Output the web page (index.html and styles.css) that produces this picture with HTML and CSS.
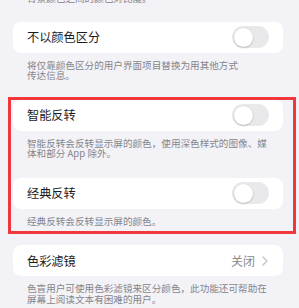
FILE: index.html
```html
<!DOCTYPE html>
<html lang="zh-CN">
<head>
<meta charset="utf-8">
<link rel="stylesheet" href="styles.css">
</head>
<body>
<div class="page">
  <p class="desc top">背景颜色之间的颜色对比度。</p>

  <div class="card"><span class="title">不以颜色区分</span><span class="toggle"><span class="knob"></span></span></div>
  <p class="desc">将仅靠颜色区分的用户界面项目替换为用其他方式<br>传达信息。</p>

  <div class="card"><span class="title">智能反转</span><span class="toggle"><span class="knob"></span></span></div>
  <p class="desc">智能反转会反转显示屏的颜色，使用深色样式的图像、媒<br>体和部分 App 除外。</p>

  <div class="card"><span class="title">经典反转</span><span class="toggle"><span class="knob"></span></span></div>
  <p class="desc">经典反转会反转显示屏的颜色。</p>

  <div class="card"><span class="title">色彩滤镜</span><span class="value">关闭<svg class="chev" width="6" height="10" viewBox="0 0 6 10"><path d="M1 1l4 4-4 4" fill="none" stroke="#c4c4c8" stroke-width="1.4" stroke-linecap="round" stroke-linejoin="round"/></svg></span></div>
  <p class="desc">色盲用户可使用色彩滤镜来区分颜色，此功能还可帮助在<br>屏幕上阅读文本有困难的用户。</p>

  <div class="highlight"></div>
</div>
</body>
</html>
```

FILE: styles.css
```css
html, body {
  margin: 0;
  padding: 0;
  background: #f2f2f7;
  overflow: hidden;
}
body {
  font-family: "Noto Sans CJK SC", "Noto Sans", sans-serif;
}
.page {
  position: relative;
  display: flow-root;
  width: 299px;
  height: 308px;
  padding: 0 16px 0 13px;
  box-sizing: border-box;
}
.desc {
  margin: 0;
  padding: 7px 14px 19px 14px;
  font-size: 9.6px;
  line-height: 10.5px;
  color: #86868b;
  white-space: nowrap;
}
.desc.top {
  margin-top: -7px;
  padding-top: 0;
  padding-bottom: 18px;
}
.card {
  height: 31px;
  background: #ffffff;
  border-radius: 8px;
  display: flex;
  align-items: center;
  justify-content: space-between;
  padding: 0 14px;
}
.title {
  font-size: 12.2px;
  color: #1c1c1e;
}
.toggle {
  width: 37px;
  height: 22px;
  border-radius: 11px;
  background: #e9e9eb;
  display: flex;
  align-items: center;
  padding: 0 1.5px;
  box-sizing: border-box;
}
.knob {
  width: 19px;
  height: 19px;
  border-radius: 50%;
  background: #ffffff;
  box-shadow: 0 1px 2px rgba(0,0,0,0.18), 0 0 0 0.5px rgba(0,0,0,0.05);
}
.value {
  display: flex;
  align-items: center;
  gap: 7px;
  font-size: 12px;
  color: #8a8a8e;
  margin-right: 1px;
}
.chev {
  display: block;
}
.highlight {
  position: absolute;
  left: 8px;
  top: 97px;
  width: 288px;
  height: 137px;
  border: 3px solid #f0383c;
  box-sizing: border-box;
  pointer-events: none;
}
```
